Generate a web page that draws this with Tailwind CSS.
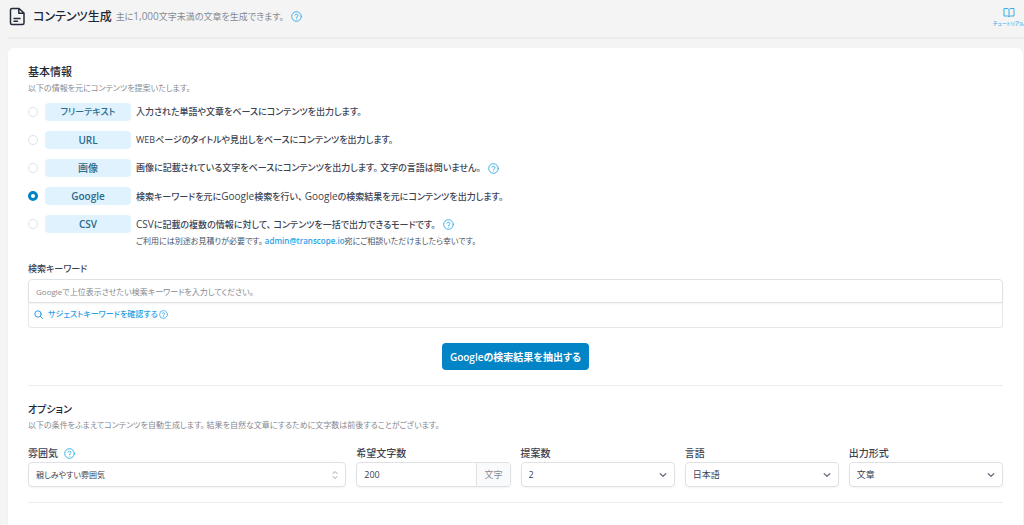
<!DOCTYPE html>
<html lang="ja">
<head>
<meta charset="utf-8">
<meta name="viewport" content="width=device-width, initial-scale=1">
<title>コンテンツ生成</title>
<script src="https://cdn.jsdelivr.net/npm/@tailwindcss/browser@4"></script>
</head>
<body class="min-h-screen overflow-x-hidden bg-[#f4f4f4] font-['Open_Sans','Noto_Sans_CJK_JP',sans-serif] text-[10px] leading-4 text-[#3b4252] [font-feature-settings:'palt']">
<svg class="hidden" aria-hidden="true">
  <symbol id="help" viewBox="0 0 24 24" fill="none" stroke="currentColor" stroke-width="2.1" stroke-linecap="round" stroke-linejoin="round"><circle cx="12" cy="12" r="10.5"/><path d="M8.8 9.2a3.3 3.3 0 0 1 6.4 1c0 2-3.2 2.4-3.2 4.2M12 17.6v.1"/></symbol>
  <symbol id="chevron" viewBox="0 0 10 10" fill="none" stroke="currentColor" stroke-width="1.3" stroke-linecap="round" stroke-linejoin="round"><path d="M2.200 3.700 5 6.300 7.800 3.700"/></symbol>
</svg>

<header class="ml-2 flex h-[39px] items-center border-b-2 border-[#eaeaea] pb-1">
  <svg class="mr-2 h-[19px] w-[17px] text-[#242b3a]" viewBox="0 0 17 19" fill="none" stroke="currentColor" stroke-width="1.5" stroke-linejoin="round" stroke-linecap="round" aria-hidden="true"><path d="M4 1.500H11L16 6V16Q16 17.500 14.500 17.500H4Q2.500 17.500 2.500 16V3Q2.500 1.500 4 1.500ZM10.800 1.700V6.200H15.700M6 11.500H12M6 14.200H9.500"/></svg>
  <h1 class="text-xs font-medium text-[#1f2735]">コンテンツ生成</h1>
  <p class="ml-1 text-[9px] text-[#858a93]">主に<span class="text-[10px]">1,000</span>文字未満の文章を生成できます。</p>
  <button type="button" aria-label="ヘルプ" class="ml-[7px] text-[#38aeea]"><svg class="size-[11px]"><use href="#help"/></svg></button>
  <a href="#" class="ml-auto flex flex-col items-center text-[5px] leading-2 font-medium text-[#38aeea]">
    <svg class="mb-px h-[11px] w-3" viewBox="0 0 12 11" fill="none" stroke="currentColor" stroke-linejoin="round" aria-hidden="true"><path d="M6 2.500Q5.500 1.500 4 1.500H1V9H4.500Q6 9 6 10Q6 9 7.500 9H11V1.500H8Q6.500 1.500 6 2.500V10"/></svg>
    <span>チュートリアル</span>
  </a>
</header>

<main class="mt-[9px] mr-px ml-2 min-h-[477px] rounded-t-md bg-white px-5 pt-4 shadow-xs">
  <h2 id="basics" class="text-[11px] leading-4 font-medium text-[#1f2735]">基本情報</h2>
  <p class="text-[8px] leading-4 text-[#858a93]">以下の情報を元にコンテンツを提案いたします。</p>

  <fieldset aria-labelledby="basics" class="mt-[7px] flex flex-col gap-[10px] text-[9px] font-medium">
    <label class="flex h-[18px] items-center"><input type="radio" name="mode" class="mr-[7px] size-[10px] appearance-none rounded-full border border-[#dfe1e4] bg-white checked:border-3 checked:border-[#0284c7]"><span class="mr-[5px] w-[86px] rounded-sm bg-[#e0f2fe] text-center leading-[18px] text-[#2b6b8c]">フリーテキスト</span><span>入力された単語や文章をベースにコンテンツを出力します。</span></label>
    <label class="flex h-[18px] items-center"><input type="radio" name="mode" class="mr-[7px] size-[10px] appearance-none rounded-full border border-[#dfe1e4] bg-white checked:border-3 checked:border-[#0284c7]"><span class="mr-[5px] w-[86px] rounded-sm bg-[#e0f2fe] text-center text-[10px] leading-[18px] font-semibold text-[#2b6b8c]">URL</span><span>WEBページのタイトルや見出しをベースにコンテンツを出力します。</span></label>
    <div class="flex h-[18px] items-center"><label class="flex items-center"><input type="radio" name="mode" class="mr-[7px] size-[10px] appearance-none rounded-full border border-[#dfe1e4] bg-white checked:border-3 checked:border-[#0284c7]"><span class="mr-[5px] w-[86px] rounded-sm bg-[#e0f2fe] text-center text-[10px] leading-[18px] text-[#2b6b8c]">画像</span><span>画像に記載されている文字をベースにコンテンツを出力します。 文字の言語は問いません。</span></label><button type="button" aria-label="ヘルプ" class="ml-[7px] text-[#38aeea]"><svg class="size-[11px]"><use href="#help"/></svg></button></div>
    <label class="flex h-[18px] items-center"><input type="radio" name="mode" checked class="mr-[7px] size-[10px] appearance-none rounded-full border border-[#dfe1e4] bg-white checked:border-3 checked:border-[#0284c7]"><span class="mr-[5px] w-[86px] rounded-sm bg-[#e0f2fe] text-center text-[10px] leading-[18px] font-semibold text-[#2b6b8c]">Google</span><span>検索キーワードを元に<span class="text-[10px]">Google</span>検索を行い、 <span class="text-[10px]">Google</span>の検索結果を元にコンテンツを出力します。</span></label>
    <div class="flex h-[18px] items-center"><label class="flex items-center"><input type="radio" name="mode" class="mr-[7px] size-[10px] appearance-none rounded-full border border-[#dfe1e4] bg-white checked:border-3 checked:border-[#0284c7]"><span class="mr-[5px] w-[86px] rounded-sm bg-[#e0f2fe] text-center text-[10px] leading-[18px] font-semibold text-[#2b6b8c]">CSV</span><span><span class="text-[10px]">CSV</span>に記載の複数の情報に対して、 コンテンツを一括で出力できるモードです。</span></label><button type="button" aria-label="ヘルプ" class="ml-[7px] text-[#38aeea]"><svg class="size-[11px]"><use href="#help"/></svg></button></div>
  </fieldset>
  <p class="ml-[108px] text-[8px] leading-4 text-[#4b5260]">ご利用には別途お見積りが必要です。 <a href="mailto:admin@transcope.io" class="font-semibold text-[#2b9fe6]">admin@transcope.io</a>宛にご相談いただけましたら幸いです。</p>

  <label for="keyword" class="mt-3 block text-[9px] leading-4 font-medium">検索キーワード</label>
  <input id="keyword" type="text" placeholder="Googleで上位表示させたい検索キーワードを入力してください。" class="mt-[2px] block h-6 w-full rounded-t-sm border border-[#dfe1e5] px-[7px] text-[8px] shadow-xs placeholder:text-[#858a93]">
  <div class="flex h-[25px] items-center rounded-b-sm border border-t-0 border-[#e5e7eb] px-[5px] pb-[2px]">
    <button type="button" class="flex items-center text-[8px] font-medium text-[#2b9fe6]"><svg class="mr-[5px] size-[9px]" viewBox="0 0 9 9" fill="none" stroke="currentColor" stroke-linecap="round" aria-hidden="true"><circle cx="4" cy="4" r="3.200"/><path d="M6.400 6.400 8.400 8.400"/></svg>サジェストキーワードを確認する<svg class="ml-px size-[9px] text-[#38aeea]" aria-hidden="true"><use href="#help"/></svg></button>
  </div>

  <div class="mt-[15px] flex justify-center border-b border-[#ececee] pb-[15px]">
    <button type="button" class="h-[27px] rounded-sm bg-[#0284c7] px-2 text-[10px] font-semibold text-white">Googleの検索結果を抽出する</button>
  </div>

  <h2 class="mt-[15px] text-[10px] leading-4 font-medium text-[#1f2735]">オプション</h2>
  <p class="text-[8px] leading-4 text-[#858a93]">以下の条件をふまえてコンテンツを自動生成します。 結果を自然な文章にするために文字数は前後することがございます。</p>

  <div class="mt-3 grid grid-cols-6 gap-[10px] border-b border-[#ececee] pb-[15px]">
    <div class="col-span-2">
      <div class="flex items-center"><label for="mood" class="font-medium">雰囲気</label><button type="button" aria-label="ヘルプ" class="ml-[6px] text-[#38aeea]"><svg class="size-[11px]"><use href="#help"/></svg></button></div>
      <div class="mt-px grid items-center">
        <select id="mood" class="col-start-1 row-start-1 h-[25px] w-full appearance-none rounded-sm border border-[#dfe1e5] px-[7px] text-[8px] shadow-xs"><option>親しみやすい雰囲気</option></select>
        <svg class="pointer-events-none col-start-1 row-start-1 mr-[7px] h-[10px] w-2 justify-self-end text-[#9ca3af]" viewBox="0 0 8 10" fill="none" stroke="currentColor" stroke-linecap="round" stroke-linejoin="round" aria-hidden="true"><path d="M2 3.500 4 1.500 6 3.500M2 6.500 4 8.500 6 6.500"/></svg>
      </div>
    </div>
    <div>
      <label for="chars" class="block font-medium">希望文字数</label>
      <div class="mt-px flex h-[25px] overflow-hidden rounded-sm border border-[#dfe1e5] text-[9px] shadow-xs">
        <input id="chars" type="text" value="200" class="min-w-0 flex-1 px-[7px]">
        <span class="border-l border-[#dfe1e5] bg-[#f9fafb] px-[7px] leading-[23px] text-[#858a93]">文字</span>
      </div>
    </div>
    <div>
      <label for="count" class="block font-medium">提案数</label>
      <div class="mt-px grid items-center">
        <select id="count" class="col-start-1 row-start-1 h-[25px] w-full appearance-none rounded-sm border border-[#dfe1e5] px-[7px] text-[9px] shadow-xs"><option>2</option></select>
        <svg class="pointer-events-none col-start-1 row-start-1 mr-[7px] size-[10px] justify-self-end text-[#6b7280]" aria-hidden="true"><use href="#chevron"/></svg>
      </div>
    </div>
    <div>
      <label for="language" class="block font-medium">言語</label>
      <div class="mt-px grid items-center">
        <select id="language" class="col-start-1 row-start-1 h-[25px] w-full appearance-none rounded-sm border border-[#dfe1e5] px-[7px] text-[9px] shadow-xs"><option>日本語</option></select>
        <svg class="pointer-events-none col-start-1 row-start-1 mr-[7px] size-[10px] justify-self-end text-[#6b7280]" aria-hidden="true"><use href="#chevron"/></svg>
      </div>
    </div>
    <div>
      <label for="format" class="block font-medium">出力形式</label>
      <div class="mt-px grid items-center">
        <select id="format" class="col-start-1 row-start-1 h-[25px] w-full appearance-none rounded-sm border border-[#dfe1e5] px-[7px] text-[9px] shadow-xs"><option>文章</option></select>
        <svg class="pointer-events-none col-start-1 row-start-1 mr-[7px] size-[10px] justify-self-end text-[#6b7280]" aria-hidden="true"><use href="#chevron"/></svg>
      </div>
    </div>
  </div>
</main>
</body>
</html>
